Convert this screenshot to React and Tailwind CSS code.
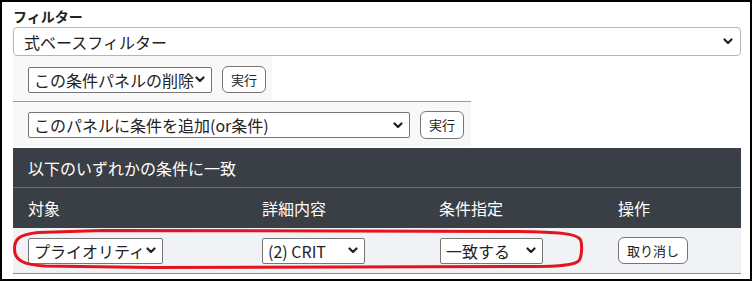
function Chevron() {
  return (
    <svg width="10" height="7" viewBox="0 0 10 7" className="shrink-0">
      <path d="M1.5 1.5 L5 5 L8.5 1.5" fill="none" stroke="#222" strokeWidth="2.2" strokeLinecap="round" strokeLinejoin="round" />
    </svg>
  );
}

function Select({ label, className = "" }) {
  return (
    <div
      className={`flex h-[26px] shrink-0 items-center justify-between rounded-[2px] border border-[#767676] bg-white pl-[5px] pr-[6px] text-[16px] leading-[24px] text-[#222] ${className}`}
    >
      <span className="whitespace-nowrap">{label}</span>
      <Chevron />
    </div>
  );
}

function Button({ children, className = "" }) {
  return (
    <button
      className={`shrink-0 whitespace-nowrap rounded-[6px] border border-[#767676] bg-white px-[8px] text-[13px] leading-[20px] text-[#222] ${className}`}
    >
      {children}
    </button>
  );
}

export default function App() {
  return (
    <div className="h-[281px] w-[752px] overflow-hidden border-2 border-black bg-white font-['Noto_Sans_CJK_JP',sans-serif]">
      <div className="pl-[11px] pr-[9px] pt-[4px]">
        <div className="text-[14px] font-bold leading-[21px] text-[#222]">フィルター</div>

        <div className="flex h-[29px] items-center justify-between rounded-[4px] border border-[#b5b5b5] bg-white pl-[10px] pr-[7px] text-[16px] leading-[24px] text-[#222]">
          <span>式ベースフィルター</span>
          <Chevron />
        </div>

        <div className="flex w-[259px] items-center gap-[10px] bg-[#f8f8f8] px-[15px] pb-[8px] pt-[10px]">
          <Select label="この条件パネルの削除" className="w-[184px]" />
          <Button className="h-[27px]">実行</Button>
        </div>

        <div className="flex w-[458px] items-center gap-[10px] border-t border-[#9a9a9a] bg-[#f8f8f8] px-[15px] pb-[8px] pt-[9px]">
          <Select label="このパネルに条件を追加(or条件)" className="w-[382px]" />
          <Button className="h-[28px]">実行</Button>
        </div>

        <div className="mt-px bg-[#3a3e45] text-[16px] text-white">
          <div className="flex h-[40px] items-center border-b border-[#6a6d72] pl-[15px]">以下のいずれかの条件に一致</div>
          <div className="grid h-[40px] grid-cols-[234px_177px_179px_138px] items-center">
            <div className="pl-[15px]">対象</div>
            <div className="pl-[15px]">詳細内容</div>
            <div className="pl-[15px]">条件指定</div>
            <div className="pl-[15px]">操作</div>
          </div>
        </div>

        <div className="relative grid h-[46px] grid-cols-[234px_177px_179px_138px] items-center border-b border-[#8a8a8a] bg-[#f1f2f6]">
          <div className="pl-[15px]">
            <Select label="プライオリティ" className="w-[135px]" />
          </div>
          <div className="pl-[15px]">
            <Select label="(2) CRIT" className="w-[103px]" />
          </div>
          <div className="pl-[16px]">
            <Select label="一致する" className="w-[103px]" />
          </div>
          <div className="pl-[15px]">
            <Button className="h-[27px]">取り消し</Button>
          </div>

          <svg className="pointer-events-none absolute left-0 top-0 overflow-visible" width="575" height="46" viewBox="0 0 575 46">
            <path
              d="M1.5 21 C1.5 11, 6 6.5, 25 4.5 L90 2.5 L505 3.5 C545 4, 563 5.5, 567 11 C569.5 15, 569 27, 566.5 32 C563 37.5, 545 38.5, 520 38.5 L140 39.5 L32 38 C10 37, 1.5 32, 1.5 21 Z"
              fill="none"
              stroke="#e3141d"
              strokeWidth="3"
            />
          </svg>
        </div>
      </div>
    </div>
  );
}
